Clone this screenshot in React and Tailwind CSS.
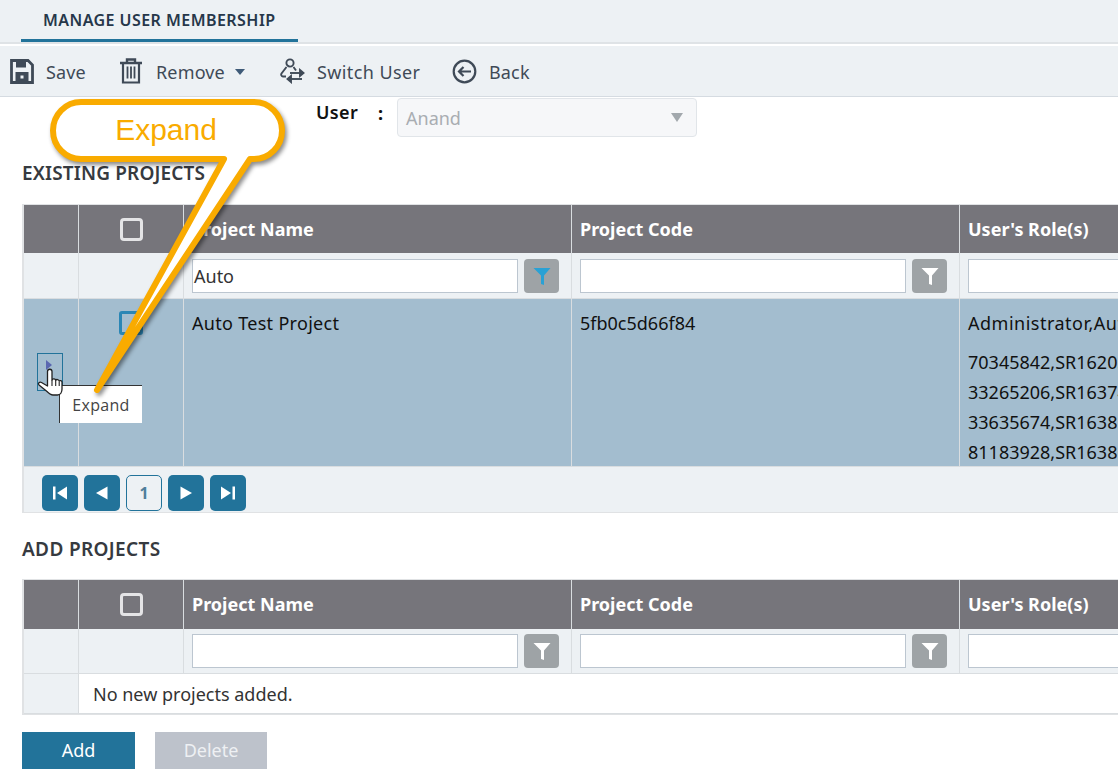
import React from "react";

const font = { fontFamily: '"Noto Sans", sans-serif' };

function Funnel({ color }) {
  return (
    <svg width="18" height="20" viewBox="0 0 18 20">
      <path d="M0.500 2h17L11 9.500V19L8 18V9.500Z" fill={color} />
    </svg>
  );
}

function Filter({ value = "", active = false }) {
  return (
    <div className="flex items-center h-full pl-2 pr-[12px] gap-[6px]">
      <div className="flex-1 h-[34px] border border-[#bcc6d0] bg-white text-[18px] text-[#333] flex items-center pl-px">
        <span className="mt-px">{value}</span>
      </div>
      <div className="w-[35px] h-[34px] rounded-[4px] bg-[#9ea3a6] flex items-center justify-center shrink-0">
        <Funnel color={active ? "#2aa1d4" : "#ffffff"} />
      </div>
    </div>
  );
}

function HeadCheck() {
  return <div className="w-[23px] h-[23px] rounded-[4px] border-[3px] border-[#e4e4e6] bg-transparent" />;
}

function HeaderRow({ tall }) {
  const cell = "border-l border-[#d9dde0] flex items-center pl-2 font-bold text-white text-[18px] overflow-hidden whitespace-nowrap";
  return (
    <div className={`grid grid-cols-[54px_105px_388px_388px_1fr] bg-[#76757b] ${tall ? "h-[49px]" : "h-[48px]"}`}>
      <div />
      <div className="border-l border-[#d9dde0] flex items-center justify-center"><HeadCheck /></div>
      <div className={cell}>Project Name</div>
      <div className={cell}>Project Code</div>
      <div className={cell}>User's Role(s)</div>
    </div>
  );
}

function FilterRow({ value, active, tall }) {
  return (
    <div className={`grid grid-cols-[54px_105px_388px_388px_1fr] bg-[#edf1f4] border-b border-[#d9dde0] ${tall ? "h-[46px]" : "h-[45px]"}`}>
      <div />
      <div className="border-l border-[#d9dde0]" />
      <div className="border-l border-[#d9dde0]"><Filter value={value} active={active} /></div>
      <div className="border-l border-[#d9dde0]"><Filter /></div>
      <div className="border-l border-[#d9dde0] pl-2 flex items-center">
        <div className="w-full h-[34px] border border-[#bcc6d0] bg-white" />
      </div>
    </div>
  );
}

function PageBtn({ children }) {
  return <div className="w-[36px] h-[36px] rounded-[5px] bg-[#22739a] flex items-center justify-center">{children}</div>;
}

function ToolItem({ icon, label, caret, className, labelClass = "tracking-[0.15px]" }) {
  return (
    <div className={`flex items-center ${className}`}>
      {icon}
      <span className={`text-[18px] mt-[2px] text-[#3f4a57] ${labelClass}`}>{label}</span>
      {caret && <span className="ml-[-3px] mt-[2px] w-0 h-0 border-l-[5.5px] border-r-[5.5px] border-t-[6px] border-l-transparent border-r-transparent border-t-[#3f5b78]" />}
    </div>
  );
}

export default function App() {
  return (
    <div style={font} className="relative w-[1118px] h-[769px] overflow-hidden bg-white text-[#222]">
      {/* tab strip */}
      <div className="h-[44px] bg-[#edf1f4] border-b-2 border-[#dfe3e6] pl-[21px]">
        <div className="w-[277px] h-[42px] border-b-[3px] border-[#22739a] pl-[22px] flex items-center text-[16px] tracking-[0.45px] font-semibold text-[#26374a]">
          MANAGE USER MEMBERSHIP
        </div>
      </div>
      <div className="h-[2px] bg-white" />
      {/* toolbar */}
      <div className="h-[51px] bg-[#edf1f4] border-b border-[#d5dbe1] flex items-center">
        <ToolItem
          className="pl-[10px] w-[119px] gap-[12px]"
          label="Save"
          icon={
            <svg width="24" height="25" viewBox="0 0 24 25" fill="none">
              <path d="M1.500 1.500h16.500l4.500 4.500v17.500h-21z" stroke="#3f4a57" strokeWidth="2.800" />
              <rect x="6" y="1.500" width="10" height="7" fill="#3f4a57" />
              <rect x="5.500" y="13" width="13" height="10" fill="#3f4a57" />
              <rect x="10.500" y="16.500" width="3" height="3" fill="#edf1f4" />
            </svg>
          }
        />
        <ToolItem
          className="w-[161px] gap-[13px]"
          label="Remove"
          caret
          icon={
            <svg width="24" height="26" viewBox="0 0 24 26" fill="none" stroke="#3f4a57">
              <path d="M1 5h22M8 4V1.500h8V4" strokeWidth="2.400" />
              <path d="M4 5v19.500h16V5" strokeWidth="2.200" />
              <path d="M8.500 8.500v12M12 8.500v12M15.500 8.500v12" strokeWidth="1.800" />
            </svg>
          }
        />
        <ToolItem
          className="w-[172px] gap-[12px]"
          label="Switch User"
          labelClass="tracking-[0.4px]"
          icon={
            <svg width="25" height="26" viewBox="0 0 25 26" fill="none" stroke="#3f4a57" strokeWidth="1.900">
              <circle cx="10" cy="5" r="3.600" />
              <path d="M6.500 9 1.500 15.500c-.8 1.200 0 3 1.500 3H6M13.500 9l2.500 3.500" />
              <path d="M10 15h12" />
              <path d="M20 12l3.500 3-3.500 3z" fill="#3f4a57" />
              <path d="M22 21H11" />
              <path d="M11 18l-3.500 3 3.500 3z" fill="#3f4a57" />
            </svg>
          }
        />
        <ToolItem
          className="gap-[12px]"
          label="Back"
          icon={
            <svg width="25" height="25" viewBox="0 0 25 25" fill="none" stroke="#3f4a57">
              <circle cx="12.500" cy="12.500" r="10.800" strokeWidth="2.200" />
              <path d="M19 12.500H7M11.500 8l-4.500 4.500 4.500 4.500" strokeWidth="2.200" />
            </svg>
          }
        />
      </div>

      {/* user selector */}
      <div className="flex items-start pl-[316px] pt-[1px] h-[40px]">
        <span className="font-semibold text-[18px] tracking-[0.4px] text-[#111] mt-px w-[62px]">User</span>
        <span className="font-bold text-[18px] text-[#111] mt-[2px] w-[19px]">:</span>
        <div className="w-[300px] h-[39px] rounded-[4px] border border-[#e1e5e9] bg-[#f6f7f9] flex items-center pl-[8px] pr-[13px] justify-between text-[18px] text-[#a9adb2]">
          <span className="mt-[1px]">Anand</span>
          <span className="w-0 h-0 border-l-[6px] border-r-[6px] border-t-[9px] border-l-transparent border-r-transparent border-t-[#a2a8ad]" />
        </div>
      </div>

      <div className="pl-[22px]">
        <h2 className="mt-[23px] text-[19px] tracking-[0.15px] leading-[26px] font-semibold text-[#363a40]">EXISTING PROJECTS</h2>

        <div className="mt-[18px] w-[1110px] border-l-2 border-t border-b border-[#e0e2e4]">
          <HeaderRow />
          <FilterRow value="Auto" active tall />
          <div className="grid grid-cols-[54px_105px_388px_388px_1fr] bg-[#a3bdcf] h-[168px] text-[18px] text-[#111] border-b border-[#d9dde0]">
            <div className="pl-[13px] pt-[54px]">
              <div className="w-[26px] h-[38px] border border-[#22739a] pl-[8px] pt-[6px]">
                <span className="block w-0 h-0 border-t-[5px] border-b-[5px] border-l-[6px] border-t-transparent border-b-transparent border-l-[#5a67b0]" />
              </div>
            </div>
            <div className="border-l border-[#d9dde0] flex justify-center pt-[12px]">
              <div className="w-[24px] h-[24px] rounded-[3px] border-[3px] border-[#2a86b5]" />
            </div>
            <div className="border-l border-[#d9dde0] pl-2 pt-[12px] leading-[24px] tracking-[0.3px]">Auto Test Project</div>
            <div className="border-l border-[#d9dde0] pl-2 pt-[12px] leading-[24px]">5fb0c5d66f84</div>
            <div className="border-l border-[#d9dde0] pl-2 pt-[12px] leading-[24px] overflow-hidden whitespace-nowrap">
              <div className="tracking-[0.5px]">Administrator,Auto</div>
              <div className="mt-[12px] leading-[30px]">
                <div>70345842,SR16203</div>
                <div>33265206,SR16374</div>
                <div>33635674,SR16385</div>
                <div>81183928,SR16386</div>
              </div>
            </div>
          </div>
          <div className="h-[45px] bg-[#edf1f4] flex items-start pt-[8px] pl-[18px] gap-[6px]">
            <PageBtn>
              <svg width="16" height="16" viewBox="0 0 16 16" fill="white"><rect x="1" y="1.500" width="2.500" height="13" /><path d="M15 1.500v13L5 8z" /></svg>
            </PageBtn>
            <PageBtn>
              <svg width="14" height="16" viewBox="0 0 14 16" fill="white"><path d="M12.500 1.500v13L1 8z" /></svg>
            </PageBtn>
            <div className="w-[36px] h-[36px] rounded-[5px] border border-[#22739a] bg-[#edf1f4] flex items-center justify-center font-bold text-[16px] text-[#4f7f9b]">1</div>
            <PageBtn>
              <svg width="14" height="16" viewBox="0 0 14 16" fill="white"><path d="M1.500 1.500v13L13 8z" /></svg>
            </PageBtn>
            <PageBtn>
              <svg width="16" height="16" viewBox="0 0 16 16" fill="white"><path d="M1 1.500v13L11 8z" /><rect x="12.500" y="1.500" width="2.500" height="13" /></svg>
            </PageBtn>
          </div>
        </div>

        <h2 className="mt-[23px] text-[19px] tracking-[0.35px] leading-[26px] font-semibold text-[#363a40]">ADD PROJECTS</h2>

        <div className="mt-[17px] w-[1110px] border-l-2 border-t border-b border-[#e0e2e4]">
          <HeaderRow tall />
          <FilterRow />
          <div className="grid grid-cols-[54px_1fr] h-[40px] text-[18px] text-[#333] border-b border-[#d9dde0]">
            <div className="bg-[#edf1f4]" />
            <div className="border-l border-[#d9dde0] flex items-center pl-[14px]"><span className="mt-px">No new projects added.</span></div>
          </div>
        </div>

        <div className="mt-[17px] flex gap-[20px]">
          <button className="w-[113px] h-[37px] bg-[#22739a] text-white text-[18px]">Add</button>
          <button className="w-[112px] h-[37px] bg-[#bdc2cb] text-[#eef0f3] text-[18px]">Delete</button>
        </div>
      </div>

      {/* tooltip */}
      <div className="absolute left-[59px] top-[385px] w-[83px] h-[38px] bg-white border-l border-t border-[#333] flex items-center justify-center text-[16px] tracking-[0.3px] text-[#444]" style={{ fontFamily: '"Open Sans", sans-serif' }}>
        Expand
      </div>

      {/* hand cursor */}
      <svg className="absolute left-[30px] top-[355px]" width="40" height="45" viewBox="30 355 40 45">
        <path d="M47.500 371.500c0-3 4.500-3 4.500 0V380c.5-1.500 3.500-1.500 3.700.5.5-1.500 3.300-1.300 3.500.8.6-1.100 2.800-.8 2.800 1V389c0 3-1.500 6-4.500 6H53c-2.500 0-4-1.500-6-3.500L39 385c-1.500-1.500.5-3.500 2.500-2.500L47.500 386Z" fill="white" stroke="#222" strokeWidth="1.300" strokeLinejoin="round" />
        <path d="M52 380v6M55.700 381v5M59.200 382v4" stroke="#222" strokeWidth="1.100" fill="none" />
      </svg>

      {/* callout */}
      <svg className="absolute left-0 top-0 drop-shadow-[2px_3px_2px_rgba(0,0,0,0.45)]" width="320" height="420" viewBox="0 0 320 420" fill="none">
        <path d="M81 102H254a28 28.500 0 0 1 0 57H250L97 390 224 159H81a28 28.500 0 0 1 0-57Z" fill="white" stroke="#f9ab00" strokeWidth="6" strokeLinejoin="round" />
      </svg>
      <div className="absolute left-[50px] top-[110px] w-[232px] text-center text-[30px] leading-[40px] text-[#f9ab00]" style={{ fontFamily: '"Liberation Sans", sans-serif' }}>
        Expand
      </div>
    </div>
  );
}
